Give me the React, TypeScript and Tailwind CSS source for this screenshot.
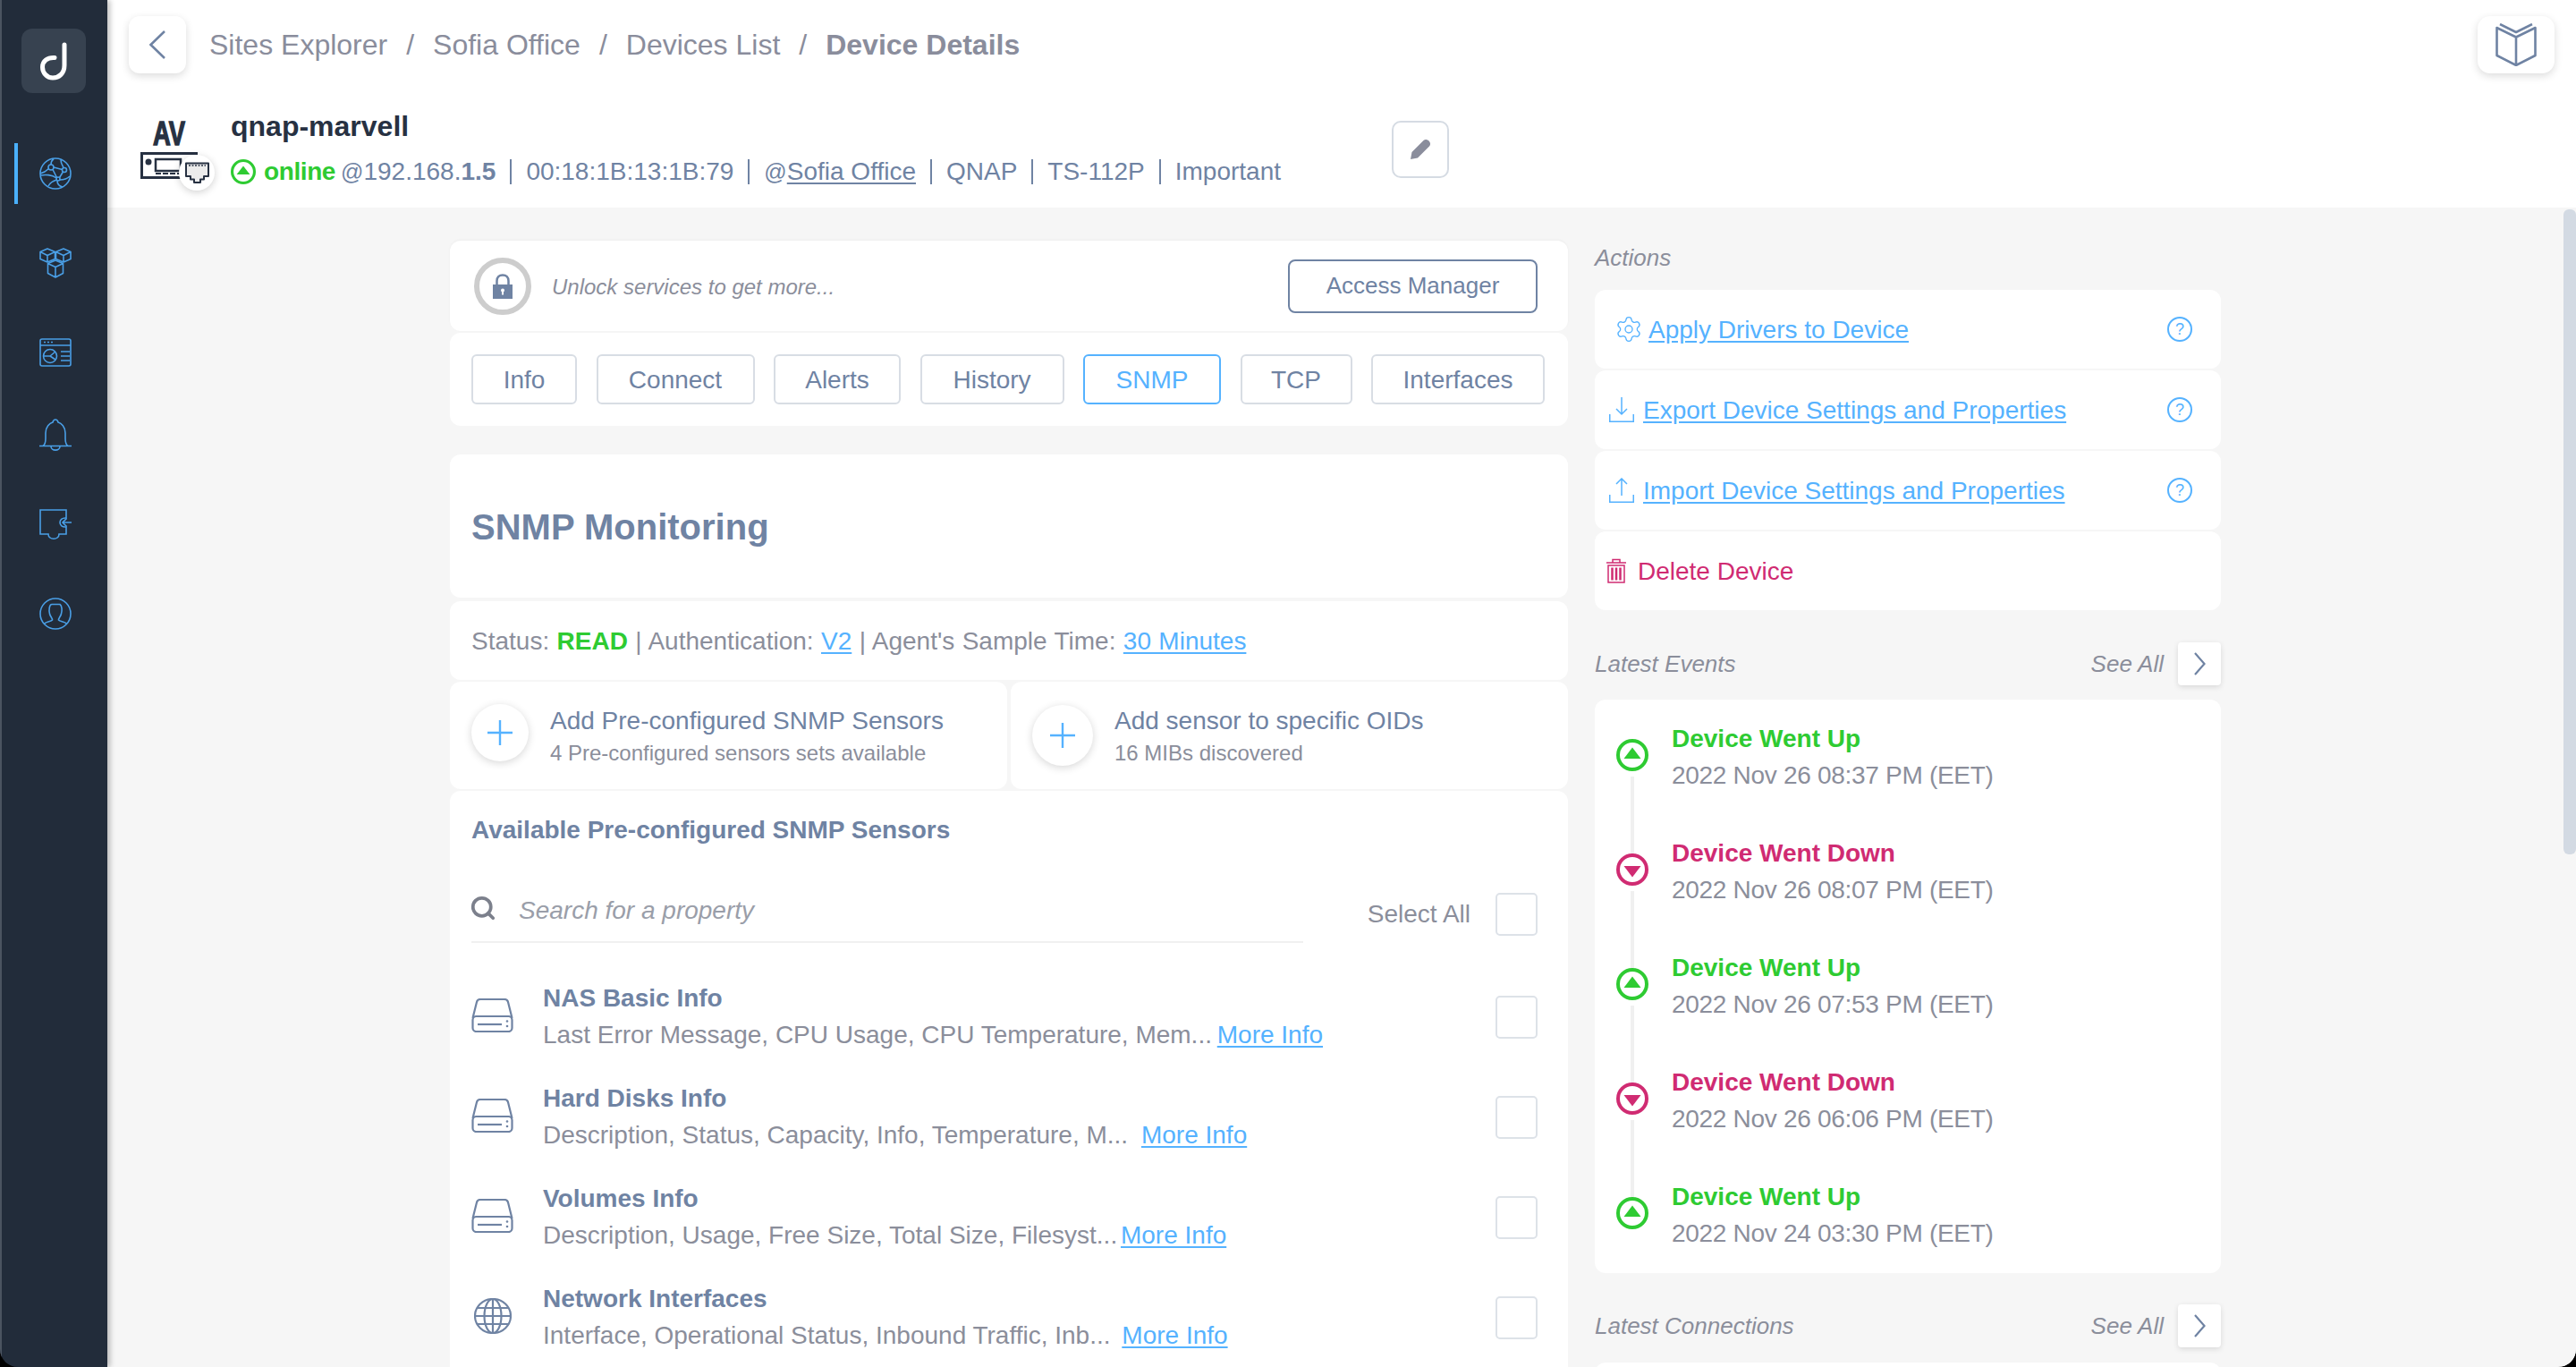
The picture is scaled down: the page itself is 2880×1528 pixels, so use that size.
import { Search, Settings } from "lucide-react";

const crumbs = ["Sites Explorer", "Sofia Office", "Devices List"];

const tabs = [
  { label: "Info", width: "w-[118px]" },
  { label: "Connect", width: "w-[177px]" },
  { label: "Alerts", width: "w-[142px]" },
  { label: "History", width: "w-[161px]" },
  { label: "SNMP", width: "w-[154px]" },
  { label: "TCP", width: "w-[125px]" },
  { label: "Interfaces", width: "w-[194px]" },
];

const sensors = [
  { name: "NAS Basic Info", desc: "Last Error Message, CPU Usage, CPU Temperature, Mem...", icon: "drive", more: "ml-[-2px]" },
  { name: "Hard Disks Info", desc: "Description, Status, Capacity, Info, Temperature, M...", icon: "drive", more: "ml-[7px]" },
  { name: "Volumes Info", desc: "Description, Usage, Free Size, Total Size, Filesyst...", icon: "drive", more: "ml-[-4px]" },
  { name: "Network Interfaces", desc: "Interface, Operational Status, Inbound Traffic, Inb...", icon: "globe", more: "ml-[5px]" },
];

const events = [
  { up: true, time: "2022 Nov 26 08:37 PM (EET)" },
  { up: false, time: "2022 Nov 26 08:07 PM (EET)" },
  { up: true, time: "2022 Nov 26 07:53 PM (EET)" },
  { up: false, time: "2022 Nov 26 06:06 PM (EET)" },
  { up: true, time: "2022 Nov 24 03:30 PM (EET)" },
];

function Logo() {
  return (
    <svg width="30" height="44" viewBox="0 0 30 44" fill="none" stroke="#fff" strokeWidth="5" strokeLinecap="round">
      <path d="M27 4 V27 C27 36 21 41 14 41 C7 41 2.5 35 2.5 29 C2.5 22 8 18 16 18.500" />
    </svg>
  );
}

function GlobeNav() {
  return (
    <svg width="36" height="36" viewBox="0 0 36 36" fill="none" stroke="#4a9fe6" strokeWidth="1.6">
      <circle cx="18" cy="18" r="17" />
      <circle cx="13" cy="11" r="3" />
      <circle cx="28" cy="14" r="2.500" />
      <circle cx="21" cy="24" r="2" />
      <path d="M16 11 L25.500 13.500 M15 13.500 L19.500 22.500 M26.500 16 L22.500 22.500 M24 2.500 C24 7 26 9 27 11.500 M16 1.500 C14 3 13 5 13 8 M1 18 C5 17 8 15 10.500 12.500 M1.500 20 C6 19 14 19 19 23 M23 25 C27 25 31 24 34 21 M10 32 C12 28 16 26 19.500 25 M20 26 C20 30 22 32 26 33" />
    </svg>
  );
}

function CubesNav() {
  return (
    <svg width="36" height="34" viewBox="0 0 36 34" fill="none" stroke="#4a9fe6" strokeWidth="1.6" strokeLinejoin="round">
      <path d="M9 1 L17.500 4.500 V12.500 L9 16 L1 12.500 V4.500 Z M1 4.500 L9 8.500 L17.500 4.500 M9 8.500 V16" />
      <path d="M27 1 L35 4.500 V12.500 L27 16 L18.500 12.500 V4.500 Z M18.500 4.500 L27 8.500 L35 4.500 M27 8.500 V16" />
      <path d="M18 14 L26.500 17.500 V28.500 L18 33 L9.500 28.500 V17.500 Z M9.500 17.500 L18 21.500 L26.500 17.500 M18 21.500 V33" />
    </svg>
  );
}

function DashNav() {
  return (
    <svg width="36" height="32" viewBox="0 0 36 32" fill="none" stroke="#4a9fe6" strokeWidth="1.6">
      <rect x="1" y="1" width="34" height="30" rx="2" />
      <path d="M1 8 H35 M5 4.500 H7 M9 4.500 H11 M13 4.500 H15 M24 15 H34 M24 20 H34 M24 25 H34" />
      <circle cx="12" cy="20" r="7.500" />
      <path d="M12 20 L18 15 M12 20 L18 24 M12 20 L4.500 20" />
    </svg>
  );
}

function BellNav() {
  return (
    <svg width="36" height="36" viewBox="0 0 36 36" fill="none" stroke="#4a9fe6" strokeWidth="1.6">
      <path d="M0 30.500 H36 M4 30.500 C6.500 29 7 26 7 22 V16 C7 9 11.500 5 15 4 C15.500 2 16.500 1 18 1 C19.500 1 20.500 2 21 4 C24.500 5 29 9 29 16 V22 C29 26 29.500 29 32 30.500 M13 31 C13 36.500 23 36.500 23 31" />
    </svg>
  );
}

function PuzzleNav() {
  return (
    <svg width="36" height="35" viewBox="0 0 36 35" fill="none" stroke="#4a9fe6" strokeWidth="1.6">
      <path d="M1 1 H30 V10 C25 9.500 23 12.500 23 15 C23 18 25.500 20.500 30 20 V28 H22 C22 35 10 35 10 28 H1 Z" />
      <path d="M36 15 H26 M30.500 10.500 L26 15 L30.500 19.500" />
    </svg>
  );
}

function UserNav() {
  return (
    <svg width="36" height="36" viewBox="0 0 36 36" fill="none" stroke="#4a9fe6" strokeWidth="1.6">
      <circle cx="18" cy="18" r="17" />
      <path d="M5.500 29.500 C7 26.500 13 27 14.500 25 C15 23.500 12 21 11.500 18 C10.500 14 11 7.500 14 7.500 H23 C25.500 9 25.500 15 24.500 18 C24 21 21 23.500 21.500 25 C23 27 29 26.500 30.500 29.500" />
    </svg>
  );
}

function AvIcon() {
  return (
    <div className="relative h-[72px] w-[101px] shrink-0">
      <div className="ml-[-6px] mt-[7px] flex h-[30px] w-[76px] scale-x-[0.76] items-center justify-center text-[36px] font-bold leading-[30px] text-[#273142] [-webkit-text-stroke:1.4px_#273142]">
        AV
      </div>
      <svg className="mt-[5px]" width="66" height="30" viewBox="0 0 66 30" fill="none" stroke="#273142" strokeWidth="3">
        <path d="M64 1.500 H1.500 V28.500 H50" />
        <circle cx="9" cy="11" r="3.500" fill="#273142" stroke="none" />
        <rect x="17" y="8" width="28" height="13" strokeWidth="2.500" />
        <path d="M17 24 H45" strokeWidth="2" strokeDasharray="6 2" />
      </svg>
      {/* rj45 badge sits on the corner of the device icon */}
      <div className="absolute left-[43px] top-[38px] flex h-[40px] w-[40px] items-center justify-center rounded-full bg-white shadow-[0_2px_8px_rgba(0,0,0,0.18)]">
        <svg width="27" height="24" viewBox="0 0 27 24" fill="#ececec" stroke="#273142" strokeWidth="2">
          <path d="M1 1.500 H26 V16 H21 V19.500 H17 V23 H10 V19.500 H6 V16 H1 Z" strokeLinejoin="round" />
          <path d="M4 4 H23" strokeWidth="1.500" strokeDasharray="2 1.500" />
        </svg>
      </div>
    </div>
  );
}

function StatusDot({ up, size = 36 }: { up: boolean; size?: number }) {
  const color = up ? "#2ecb32" : "#d02b72";
  return (
    <svg width={size} height={size} viewBox="0 0 36 36" fill="none">
      <circle cx="18" cy="18" r="16" stroke={color} strokeWidth="4" />
      <path d={up ? "M18 9.500 L27.500 22 H8.500 Z" : "M18 26.500 L27.500 14 H8.500 Z"} fill={color} />
    </svg>
  );
}

function Drive() {
  return (
    <svg className="mb-[4px]" width="47" height="38" viewBox="0 0 47 38" fill="none" stroke="#6f83a3" strokeWidth="2.200">
      <path d="M1.500 22 L6 4 C6.500 2 8 1 10 1 H37 C39 1 40.500 2 41 4 L45.500 22" />
      <rect x="1.500" y="20" width="44" height="17" rx="4" />
      <path d="M7 29 H34" />
      <circle cx="40" cy="25.500" r="1.300" fill="#6f83a3" stroke="none" />
      <circle cx="40" cy="31" r="1.300" fill="#6f83a3" stroke="none" />
    </svg>
  );
}

function GlobeRow() {
  return (
    <svg className="ml-[3px] mb-[4px]" width="42" height="40" viewBox="0 0 42 40" fill="none" stroke="#6f83a3" strokeWidth="2.200">
      <ellipse cx="21" cy="20" rx="20" ry="19" />
      <ellipse cx="21" cy="20" rx="9.500" ry="19" />
      <path d="M21 1 V39 M3.500 11 H38.500 M1 20 H41 M3.500 29 H38.500" />
    </svg>
  );
}

function HelpIcon() {
  return (
    <span className="flex h-[28px] w-[28px] items-center justify-center rounded-full border-2 border-[#55b2ff] text-[18px] leading-none text-[#55b2ff]">
      ?
    </span>
  );
}

function Checkbox() {
  return <span className="block h-[48px] w-[47px] shrink-0 rounded-[5px] border-2 border-[#dde2e8] bg-white" />;
}

function Plus({ size }: { size: string }) {
  return (
    <span className={`${size} flex shrink-0 items-center justify-center rounded-full bg-white shadow-[0_2px_10px_rgba(0,0,0,0.16)]`}>
      <svg width="28" height="28" viewBox="0 0 28 28" stroke="#55b2ff" strokeWidth="2.400">
        <path d="M14 0 V28 M0 14 H28" />
      </svg>
    </span>
  );
}

function SectionHead({ title }: { title: string }) {
  return (
    <div className="flex h-[48px] items-center text-[26px] italic leading-[36px] text-[#8b8e9b]">
      <span>{title}</span>
      <span className="ml-auto">See All</span>
      <span className="ml-[16px] flex h-[48px] w-[48px] items-center justify-center rounded-[4px] bg-white shadow-[0_2px_6px_rgba(0,0,0,0.12)]">
        <svg width="14" height="26" viewBox="0 0 14 26" fill="none" stroke="#6f83a3" strokeWidth="2.200">
          <path d="M2 1 L12.500 13 L2 25" />
        </svg>
      </span>
    </div>
  );
}

function ActionCard({ icon, text, ml }: { icon: React.ReactNode; text: string; ml: string }) {
  return (
    <div className="flex h-[88px] items-center rounded-[12px] bg-white pr-[32px]">
      {icon}
      <a className={`${ml} pt-[1px] text-[28px] leading-[36px] text-[#55b2ff] underline underline-offset-[3px]`}>{text}</a>
      <span className="ml-auto">
        <HelpIcon />
      </span>
    </div>
  );
}

export default function App() {
  return (
    <div className="h-[1528px] w-[2880px] overflow-hidden bg-black [font-family:'Liberation_Sans',Arial,sans-serif]">
      <div className="flex h-full overflow-hidden rounded-b-[20px]">
        <aside className="relative z-10 flex w-[120px] shrink-0 flex-col items-center border-l-2 border-[#4b5460] bg-[#222c3a] shadow-[3px_0_6px_rgba(0,0,0,0.25)]">
          <div className="ml-[-2px] mt-[32px] flex h-[72px] w-[72px] items-center justify-center rounded-[12px] bg-[#374250]">
            <Logo />
          </div>
          <div className="relative mt-[72px] ml-[2px]">
            <span className="absolute left-[-28px] top-[-16px] h-[68px] w-[4px] bg-[#4ab0fb]" />
            <GlobeNav />
          </div>
          <div className="mt-[65px] ml-[2px]">
            <CubesNav />
          </div>
          <div className="mt-[67px] ml-[2px]">
            <DashNav />
          </div>
          <div className="mt-[58px] ml-[2px]">
            <BellNav />
          </div>
          <div className="mt-[65px] ml-[2px]">
            <PuzzleNav />
          </div>
          <div className="mt-[64px] ml-[2px]">
            <UserNav />
          </div>
        </aside>

        <div className="flex min-w-0 flex-1 flex-col bg-[#f6f6f6]">
          <header className="h-[232px] shrink-0 bg-white">
            <div className="flex items-center pl-[24px] pr-[24px] pt-[18px]">
              <button className="flex h-[64px] w-[64px] items-center justify-center rounded-[12px] bg-white shadow-[0_3px_10px_rgba(0,0,0,0.14)]">
                <svg width="20" height="32" viewBox="0 0 20 32" fill="none" stroke="#6f83a3" strokeWidth="2.600">
                  <path d="M18 1 L2.500 16 L18 31" />
                </svg>
              </button>
              <nav className="ml-[26px] flex items-center text-[32px] leading-[40px] text-[#8a8d9c]">
                {crumbs.map((c) => (
                  <span key={c}>
                    {c}
                    <span className="mx-[21px]">/</span>
                  </span>
                ))}
                <span className="font-bold">Device Details</span>
              </nav>
              <button className="ml-auto flex h-[64px] w-[86px] items-center justify-center rounded-[14px] bg-white shadow-[0_3px_10px_rgba(0,0,0,0.14)]">
                <svg width="46" height="48" viewBox="0 0 46 48" fill="none" stroke="#6f83a3" strokeWidth="2.600" strokeLinejoin="round">
                  <path d="M5 1 L23 10 L41 1 M1.500 5 L23 15.500 L44.500 5 V36 L23 47 L1.500 36 Z M23 15.500 V47" />
                </svg>
              </button>
            </div>
            <div className="mt-[41px] flex items-start pl-[37px]">
              <div className="pt-[5px]">
                <AvIcon />
              </div>
              <div>
                <h1 className="text-[32px] font-bold leading-[36px] text-[#273142]">qnap-marvell</h1>
                <div className="mt-[15px] flex h-[36px] items-center text-[28px] text-[#6f83a3]">
                  <StatusDot up size={28} />
                  <span className="ml-[9px] font-bold tracking-[-0.4px] text-[#2ecb32]">online</span>
                  <span className="ml-[6px]">
                    <span className="text-[25px]">@</span>192.168.<b>1.5</b>
                  </span>
                  <span className="mx-[16px] h-[28px] w-[2px] bg-[#6f83a3]" />
                  <span>00:18:1B:13:1B:79</span>
                  <span className="mx-[16px] h-[28px] w-[2px] bg-[#6f83a3]" />
                  <span>
                    <span className="text-[25px]">@</span>
                    <span className="underline underline-offset-[3px]">Sofia Office</span>
                  </span>
                  <span className="mx-[16px] h-[28px] w-[2px] bg-[#6f83a3]" />
                  <span>QNAP</span>
                  <span className="mx-[16px] h-[28px] w-[2px] bg-[#6f83a3]" />
                  <span>TS-112P</span>
                  <span className="mx-[16px] h-[28px] w-[2px] bg-[#6f83a3]" />
                  <span>Important</span>
                </div>
              </div>
              <button className="ml-[124px] mt-[12px] flex h-[64px] w-[64px] items-center justify-center rounded-[10px] border-2 border-[#d5dbe3] bg-white">
                <svg width="24" height="24" viewBox="0 0 24 24">
                  <path d="M1 23 L2.500 15 L15.500 2 C17 0.500 19.500 0.500 21.500 2.500 C23.500 4.500 23.500 7 22 8.500 L9 21.500 Z" fill="#8a8d9c" />
                </svg>
              </button>
            </div>
          </header>

          <div className="flex min-h-0 flex-1">
            <main className="flex min-w-0 flex-1 justify-center gap-[30px] overflow-hidden pt-[37px]">
              <section className="w-[1250px] shrink-0">
                <div className="flex h-[101px] items-center rounded-[12px] bg-white pl-[27px] pr-[34px] shadow-[0_-1px_3px_rgba(0,0,0,0.04)]">
                  <span className="flex h-[64px] w-[64px] items-center justify-center rounded-full border-[6px] border-[#cdcdcd]">
                    <svg width="22" height="28" viewBox="0 0 22 28">
                      <path d="M4.500 13 V8 C4.500 4 7 1.500 11 1.500 C15 1.500 17.500 4 17.500 8 V13" fill="none" stroke="#6f83a3" strokeWidth="2.500" />
                      <rect y="12" width="22" height="16" fill="#6f83a3" />
                      <circle cx="11" cy="18.500" r="2" fill="#fff" />
                      <rect x="10" y="19" width="2" height="4.500" fill="#fff" />
                    </svg>
                  </span>
                  <span className="ml-[23px] pt-[2px] text-[24px] italic leading-[36px] text-[#8b8e9b]">Unlock services to get more...</span>
                  <button className="ml-auto h-[60px] w-[279px] rounded-[8px] border-2 border-[#6f83a3] text-[26px] text-[#6f83a3]">
                    Access Manager
                  </button>
                </div>

                <div className="mt-[2px] flex h-[104px] gap-[21.5px] rounded-[12px] bg-white pl-[24px] pt-[24px]">
                  {tabs.map((t) => (
                    <span
                      key={t.label}
                      className={`${t.width} flex h-[56px] items-center justify-center rounded-[6px] border-2 pt-[1px] text-[28px] ${
                        t.label === "SNMP" ? "border-[#55b2ff] text-[#55b2ff]" : "border-[#d8dde4] text-[#6f83a3]"
                      }`}
                    >
                      {t.label}
                    </span>
                  ))}
                </div>

                <div className="mt-[32px] flex h-[160px] items-center rounded-[12px] bg-white pl-[24px] pt-[1px]">
                  <h2 className="text-[40px] font-bold leading-[48px] text-[#6f83a3]">SNMP Monitoring</h2>
                </div>

                <div className="mt-[4px] flex h-[88px] items-center whitespace-pre rounded-[12px] bg-white pl-[24px] pt-[1px] text-[28px] text-[#8b8e9b] [word-spacing:0.6px]">
                  Status: <b className="text-[#2ecb32]">READ</b> | Authentication:{" "}
                  <a className="text-[#55b2ff] underline underline-offset-[3px]">V2</a> | Agent's Sample Time:{" "}
                  <a className="text-[#55b2ff] underline underline-offset-[3px]">30 Minutes</a>
                </div>

                <div className="mt-[2px] flex h-[120px] gap-[4px]">
                  <div className="flex flex-1 items-center rounded-[12px] bg-white pl-[24px]">
                    <Plus size="mb-[6px] h-[64px] w-[64px]" />
                    <div className="ml-[24px] pt-[4px]">
                      <div className="text-[28px] leading-[36px] text-[#6f83a3]">Add Pre-configured SNMP Sensors</div>
                      <div className="text-[24px] leading-[36px] text-[#8b8e9b]">4 Pre-configured sensors sets available</div>
                    </div>
                  </div>
                  <div className="flex flex-1 items-center rounded-[12px] bg-white pl-[24px]">
                    <Plus size="h-[68px] w-[68px]" />
                    <div className="ml-[24px] pt-[4px]">
                      <div className="text-[28px] leading-[36px] text-[#6f83a3]">Add sensor to specific OIDs</div>
                      <div className="text-[24px] leading-[36px] text-[#8b8e9b]">16 MIBs discovered</div>
                    </div>
                  </div>
                </div>

                <div className="mt-[2px] rounded-[12px] bg-white pb-[40px] pl-[24px] pr-[34px] pt-[26px]">
                  <h3 className="text-[28px] font-bold leading-[36px] text-[#6f83a3]">Available Pre-configured SNMP Sensors</h3>
                  <div className="mt-[38px] flex items-start">
                    <div className="flex h-[70px] w-[930px] items-center border-b-2 border-[#f0f0f0]">
                      <Search size={30} strokeWidth={3} color="#7c808c" className="mb-[6px] ml-[-2px]" />
                      <span className="ml-[25px] text-[28px] italic text-[#9a9ea9]">Search for a property</span>
                    </div>
                    <div className="ml-auto mt-[14px] flex items-center gap-[28px]">
                      <span className="text-[28px] text-[#8b8e9b]">Select All</span>
                      <Checkbox />
                    </div>
                  </div>
                  <div className="mt-[44px] flex flex-col gap-[35px]">
                    {sensors.map((s) => (
                      <div key={s.name} className="flex items-center">
                        <div className="w-[80px] shrink-0">{s.icon === "drive" ? <Drive /> : <GlobeRow />}</div>
                        <div className="min-w-0 flex-1">
                          <div className="text-[28px] font-bold leading-[36px] text-[#6f83a3]">{s.name}</div>
                          <div className="mt-[5px] text-[28px] leading-[36px] text-[#8b8e9b]">
                            {s.desc} <a className={`${s.more} text-[#55b2ff] underline underline-offset-[3px]`}>More Info</a>
                          </div>
                        </div>
                        <Checkbox />
                      </div>
                    ))}
                  </div>
                </div>
              </section>

              <section className="w-[700px] shrink-0">
                <div className="mt-[1px] text-[26px] italic leading-[36px] text-[#8b8e9b]">Actions</div>
                <div className="mt-[18px] flex flex-col gap-[2px]">
                  <ActionCard
                    ml="ml-[6px]"
                    text="Apply Drivers to Device"
                    icon={
                      <span className="ml-[22px]">
                        <Settings size={32} strokeWidth={1} color="#55b2ff" />
                      </span>
                    }
                  />
                  <ActionCard
                    ml="ml-[10px]"
                    text="Export Device Settings and Properties"
                    icon={
                      <svg className="ml-[16px]" width="28" height="28" viewBox="0 0 28 28" fill="none" stroke="#55b2ff" strokeWidth="1.500">
                        <path d="M14 0 V19 M8 13 L14 19 L20 13 M0.750 19 V27.250 H27.250 V19" />
                      </svg>
                    }
                  />
                  <ActionCard
                    ml="ml-[10px]"
                    text="Import Device Settings and Properties"
                    icon={
                      <svg className="ml-[16px]" width="28" height="28" viewBox="0 0 28 28" fill="none" stroke="#55b2ff" strokeWidth="1.500">
                        <path d="M14 20 V1 M8 7 L14 1 L20 7 M0.750 19 V27.250 H27.250 V19" />
                      </svg>
                    }
                  />
                  <div className="flex h-[88px] items-center rounded-[12px] bg-white">
                    <svg className="ml-[12px]" width="24" height="28" viewBox="0 0 24 28" fill="none" stroke="#d02b72" strokeWidth="1.500">
                      <path d="M1 5 H23 M8 5 V1.500 H16 V5 M3 8 H21 V27 H3 Z" />
                      <path d="M7.500 10.500 V24.500 M12 10.500 V24.500 M16.500 10.500 V24.500" strokeWidth="2.500" />
                    </svg>
                    <span className="ml-[12px] pt-[1px] text-[28px] leading-[36px] text-[#d02b72]">Delete Device</span>
                  </div>
                </div>

                <div className="mt-[36px]">
                  <SectionHead title="Latest Events" />
                </div>
                <div className="mt-[16px] flex flex-col gap-[51px] rounded-[12px] bg-white py-[26px] pl-[24px]">
                  {events.map((e, i) => (
                    <div key={i} className="flex">
                      <div className="relative w-[62px] shrink-0 pt-[18px]">
                        <StatusDot up={e.up} />
                        {i < events.length - 1 && (
                          <span className="absolute left-[16px] top-[60px] h-[88px] w-[4px] bg-[#f0f0f0]" />
                        )}
                      </div>
                      <div>
                        <div className={`text-[28px] font-bold leading-[36px] ${e.up ? "text-[#2ecb32]" : "text-[#d02b72]"}`}>
                          {e.up ? "Device Went Up" : "Device Went Down"}
                        </div>
                        <div className="mt-[5px] text-[28px] leading-[36px] tracking-[-0.3px] text-[#8b8e9b]">{e.time}</div>
                      </div>
                    </div>
                  ))}
                </div>

                <div className="mt-[35px]">
                  <SectionHead title="Latest Connections" />
                </div>
                <div className="mt-[17px] h-[200px] rounded-[12px] bg-white" />
              </section>
            </main>

            <div className="w-[14px] shrink-0 bg-[#f6f6f6]">
              <div className="mt-[2px] h-[721px] rounded-[6px] bg-[#d3dae3]" />
            </div>
          </div>
        </div>
      </div>
    </div>
  );
}
